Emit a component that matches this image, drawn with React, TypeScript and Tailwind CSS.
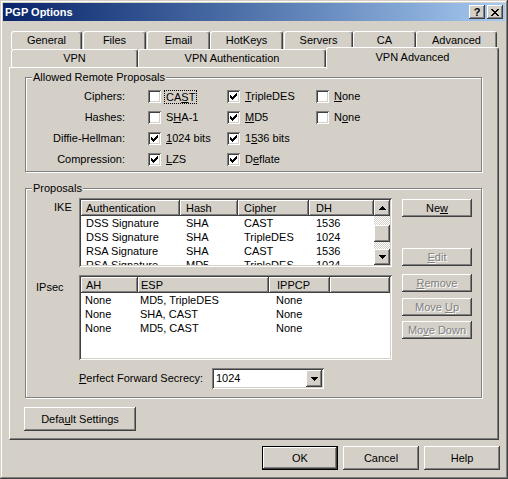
import React from "react";

const RAISED =
  "bg-[#D4D0C8] shadow-[inset_-1px_-1px_0_#404040,inset_1px_1px_0_#ffffff,inset_-2px_-2px_0_#808080]";
const SUNKEN =
  "shadow-[inset_1px_1px_0_#808080,inset_-1px_-1px_0_#ffffff,inset_2px_2px_0_#404040,inset_-2px_-2px_0_#D4D0C8]";
const ETCHED =
  "border border-[#808080] shadow-[inset_1px_1px_0_#ffffff,1px_1px_0_#ffffff]";

function CheckMark() {
  const rects: [number, number, number][] = [
    [6, 0, 1],
    [5, 1, 2],
    [0, 2, 1],
    [4, 2, 3],
    [0, 3, 2],
    [3, 3, 3],
    [0, 4, 5],
    [1, 5, 3],
    [2, 6, 1],
  ];
  return (
    <svg
      className="absolute left-[3px] top-[3px]"
      width="7"
      height="7"
      viewBox="0 0 7 7"
      shapeRendering="crispEdges"
    >
      {rects.map(([x, y, w], i) => (
        <rect key={i} x={x} y={y} width={w} height={1} fill="#000" />
      ))}
    </svg>
  );
}

function Check({ checked }: { checked: boolean }) {
  return (
    <span className={"relative block w-[13px] h-[13px] shrink-0 bg-white " + SUNKEN}>
      {checked && <CheckMark />}
    </span>
  );
}

function Arrow({ up }: { up?: boolean }) {
  const rows = up
    ? [
        [3, 0, 1],
        [2, 1, 3],
        [1, 2, 5],
        [0, 3, 7],
      ]
    : [
        [0, 0, 7],
        [1, 1, 5],
        [2, 2, 3],
        [3, 3, 1],
      ];
  return (
    <svg width="7" height="4" viewBox="0 0 7 4" shapeRendering="crispEdges">
      {rows.map(([x, y, w], i) => (
        <rect key={i} x={x} y={y} width={w} height={1} fill="#000" />
      ))}
    </svg>
  );
}

function CloseGlyph() {
  const rows: [number, number, number][] = [
    [0, 0, 2],
    [6, 0, 2],
    [1, 1, 2],
    [5, 1, 2],
    [2, 2, 4],
    [3, 3, 2],
    [2, 4, 4],
    [1, 5, 2],
    [5, 5, 2],
    [0, 6, 2],
    [6, 6, 2],
  ];
  return (
    <svg width="8" height="7" viewBox="0 0 8 7" shapeRendering="crispEdges">
      {rows.map(([x, y, w], i) => (
        <rect key={i} x={x} y={y} width={w} height={1} fill="#000" />
      ))}
    </svg>
  );
}

function Tab({
  label,
  w,
  ml,
  selected,
}: {
  label: string;
  w: number;
  ml: number;
  selected?: boolean;
}) {
  return (
    <div
      style={{ width: w, marginLeft: ml }}
      className={
        "shrink-0 flex items-center justify-center border-t border-l border-r border-t-white border-l-white border-r-[#404040] rounded-t-[3px] shadow-[inset_-1px_0_0_#808080] bg-[#D4D0C8] whitespace-nowrap " +
        (selected ? "relative z-10 -mt-[2px] h-[22px] pb-[3px]" : "h-[18px]")
      }
    >
      {label}
    </div>
  );
}

function Btn({
  children,
  w,
  h,
  disabled,
  def,
  className = "",
}: {
  children: React.ReactNode;
  w: number;
  h: number;
  disabled?: boolean;
  def?: boolean;
  className?: string;
}) {
  const inner = (
    <div
      style={def ? undefined : { width: w, height: h }}
      className={
        RAISED +
        " flex items-center justify-center whitespace-nowrap " +
        (def ? "w-full h-full " : "") +
        (disabled ? "text-[#808080] [text-shadow:1px_1px_0_#ffffff] " : "")
      }
    >
      <span>{children}</span>
    </div>
  );
  if (def) {
    return (
      <div style={{ width: w, height: h }} className={"border border-black " + className}>
        {inner}
      </div>
    );
  }
  return <div className={className}>{inner}</div>;
}

function Group({
  title,
  h,
  className = "",
  children,
}: {
  title: string;
  h: number;
  className?: string;
  children: React.ReactNode;
}) {
  return (
    <div style={{ height: h }} className={"relative w-[457px] " + ETCHED + " " + className}>
      <span className="absolute left-[6px] -top-[7px] px-[1px] bg-[#D4D0C8] leading-[13px]">
        {title}
      </span>
      {children}
    </div>
  );
}

function OptRow({
  label,
  cells,
}: {
  label: string;
  cells: { checked: boolean; text: React.ReactNode; focus?: boolean; w: number }[];
}) {
  return (
    <div className="flex items-center h-[21px]">
      <div className="w-[99px] text-right whitespace-nowrap">{label}</div>
      <div className="w-[23px]" />
      {cells.map((c, i) => (
        <div key={i} style={{ width: c.w }} className="flex items-center shrink-0">
          <Check checked={c.checked} />
          {c.focus ? (
            <span className="ml-[3px] border border-dotted border-black px-[1px] leading-[12px]">
              {c.text}
            </span>
          ) : (
            <span className="ml-[5px] whitespace-nowrap">{c.text}</span>
          )}
        </div>
      ))}
    </div>
  );
}

const HEAD =
  "h-[16px] shrink-0 flex items-center overflow-hidden whitespace-nowrap bg-[#D4D0C8] shadow-[inset_-1px_-1px_0_#404040,inset_1px_1px_0_#ffffff,inset_-2px_-2px_0_#808080]";

function IkeList() {
  const cols = [
    { w: 99, pl: 5 },
    { w: 58, pl: 6 },
    { w: 71, pl: 6 },
    { w: 65, pl: 7 },
  ];
  const heads = ["Authentication", "Hash", "Cipher", "DH"];
  const rows = [
    ["DSS Signature", "SHA", "CAST", "1536"],
    ["DSS Signature", "SHA", "TripleDES", "1024"],
    ["RSA Signature", "SHA", "CAST", "1536"],
    ["RSA Signature", "MD5", "TripleDES", "1024"],
  ];
  return (
    <div className={"w-[313px] h-[69px] p-[2px] bg-white flex " + SUNKEN}>
      <div className="flex-1 flex flex-col overflow-hidden">
        <div className="flex">
          {heads.map((h, i) => (
            <div key={i} style={{ width: cols[i].w, paddingLeft: cols[i].pl }} className={HEAD}>
              {h}
            </div>
          ))}
        </div>
        {rows.map((r, ri) => (
          <div key={ri} className="flex h-[14px] shrink-0 items-center">
            {r.map((c, i) => (
              <div
                key={i}
                style={{ width: cols[i].w, paddingLeft: cols[i].pl }}
                className="shrink-0 whitespace-nowrap leading-[14px]"
              >
                {c}
              </div>
            ))}
          </div>
        ))}
      </div>
      <div className="w-[16px] flex flex-col">
        <div className={"h-[16px] shrink-0 flex items-center justify-center " + RAISED}>
          <Arrow up />
        </div>
        <div className="flex-1 bg-[repeating-conic-gradient(#D4D0C8_0_25%,#ffffff_0_50%)] bg-[length:2px_2px]">
          <div className={"mt-[9px] h-[17px] " + RAISED} />
        </div>
        <div className={"h-[16px] shrink-0 flex items-center justify-center " + RAISED}>
          <Arrow />
        </div>
      </div>
    </div>
  );
}

function IpsecList() {
  const cols = [
    { w: 57, pl: 4 },
    { w: 131, pl: 2 },
    { w: 61, pl: 7 },
  ];
  const heads = ["AH", "ESP", "IPPCP"];
  const rows = [
    ["None", "MD5, TripleDES", "None"],
    ["None", "SHA, CAST", "None"],
    ["None", "MD5, CAST", "None"],
  ];
  return (
    <div className={"w-[313px] h-[85px] p-[2px] bg-white " + SUNKEN}>
      <div className="flex flex-col overflow-hidden h-full">
        <div className="flex">
          {heads.map((h, i) => (
            <div
              key={i}
              style={{ width: cols[i].w, paddingLeft: cols[i].pl + 1 }}
              className={HEAD}
            >
              {h}
            </div>
          ))}
          <div className={HEAD + " flex-1"} />
        </div>
        {rows.map((r, ri) => (
          <div key={ri} className="flex h-[14px] shrink-0 items-center">
            {r.map((c, i) => (
              <div
                key={i}
                style={{ width: cols[i].w, paddingLeft: cols[i].pl }}
                className="shrink-0 whitespace-nowrap leading-[14px]"
              >
                {c}
              </div>
            ))}
          </div>
        ))}
      </div>
    </div>
  );
}

export default function App() {
  const row1: [string, number, number][] = [
    ["General", 71, 0],
    ["Files", 63, 1],
    ["Email", 63, 1],
    ["HotKeys", 73, 0],
    ["Servers", 69, 1],
    ["CA", 63, 0],
    ["Advanced", 81, 0],
  ];
  return (
    <div className="w-[508px] h-[479px] bg-[#D4D0C8] p-[3px] font-['Liberation_Sans',Arial,sans-serif] text-[11px] leading-[13px] text-black shadow-[inset_-1px_-1px_0_#404040,inset_1px_1px_0_#D4D0C8,inset_-2px_-2px_0_#808080,inset_2px_2px_0_#ffffff] select-none">
      {/* Title bar */}
      <div className="h-[18px] flex items-center bg-gradient-to-r from-[#0A246A] to-[#A6CAF0] pl-[2px] pr-[2px]">
        <span className="font-bold text-white flex-1">PGP Options</span>
        <div className={"w-[16px] h-[14px] flex items-center justify-center " + RAISED}>
          <span className="font-bold text-[11px] leading-none">?</span>
        </div>
        <div className={"ml-[2px] w-[16px] h-[14px] flex items-center justify-center " + RAISED}>
          <CloseGlyph />
        </div>
      </div>

      {/* Tabs */}
      <div className="mt-[10px] ml-[8px] flex h-[18px]">
        {row1.map(([l, w, ml]) => (
          <Tab key={l} label={l} w={w} ml={ml} />
        ))}
      </div>
      <div className="ml-[8px] flex h-[18px] items-start">
        <Tab label="VPN" w={127} ml={0} />
        <Tab label="VPN Authentication" w={188} ml={0} />
        <Tab label="VPN Advanced" w={173} ml={0} selected />
      </div>

      {/* Panel */}
      <div className="ml-[6px] w-[490px] h-[373px] border-t border-l border-r border-b border-t-white border-l-white border-r-[#404040] border-b-[#404040] shadow-[inset_-1px_-1px_0_#808080] pl-[15px] pt-[9px]">
        <Group title="Allowed Remote Proposals" h={95}>
          <div className="pt-[8px]">
            <OptRow
              label="Ciphers:"
              cells={[
                {
                  checked: false,
                  focus: true,
                  w: 79,
                  text: (
                    <>
                      CA<u>S</u>T
                    </>
                  ),
                },
                {
                  checked: true,
                  w: 89,
                  text: (
                    <>
                      <u>T</u>ripleDES
                    </>
                  ),
                },
                {
                  checked: false,
                  w: 80,
                  text: (
                    <>
                      <u>N</u>one
                    </>
                  ),
                },
              ]}
            />
            <OptRow
              label="Hashes:"
              cells={[
                {
                  checked: false,
                  w: 79,
                  text: (
                    <>
                      S<u>H</u>A-1
                    </>
                  ),
                },
                {
                  checked: true,
                  w: 89,
                  text: (
                    <>
                      <u>M</u>D5
                    </>
                  ),
                },
                {
                  checked: false,
                  w: 80,
                  text: (
                    <>
                      N<u>o</u>ne
                    </>
                  ),
                },
              ]}
            />
            <OptRow
              label="Diffie-Hellman:"
              cells={[
                {
                  checked: true,
                  w: 79,
                  text: (
                    <>
                      <u>1</u>024 bits
                    </>
                  ),
                },
                {
                  checked: true,
                  w: 89,
                  text: (
                    <>
                      1<u>5</u>36 bits
                    </>
                  ),
                },
              ]}
            />
            <OptRow
              label="Compression:"
              cells={[
                {
                  checked: true,
                  w: 79,
                  text: (
                    <>
                      <u>L</u>ZS
                    </>
                  ),
                },
                {
                  checked: true,
                  w: 89,
                  text: (
                    <>
                      D<u>e</u>flate
                    </>
                  ),
                },
              ]}
            />
          </div>
        </Group>

        <Group title="Proposals" h={210} className="mt-[16px]">
          <div className="flex">
            <div className="flex flex-col pt-[9px]">
              <div className="flex">
                <div className="w-[53px] pl-[28px] pt-[3px]">IKE</div>
                <IkeList />
              </div>
              <div className="flex mt-[8px]">
                <div className="w-[53px] pl-[10px] pt-[6px]">IPsec</div>
                <IpsecList />
              </div>
            </div>
            <div className="ml-[10px] flex flex-col">
              <Btn w={70} h={18} className="mt-[10px]">
                Ne<u>w</u>
              </Btn>
              <Btn w={70} h={18} className="mt-[31px]" disabled>
                <u>E</u>dit
              </Btn>
              <Btn w={70} h={18} className="mt-[8px]" disabled>
                <u>R</u>emove
              </Btn>
              <Btn w={70} h={18} className="mt-[6px]" disabled>
                Move <u>U</u>p
              </Btn>
              <Btn w={70} h={18} className="mt-[5px]" disabled>
                Mo<u>v</u>e Down
              </Btn>
            </div>
          </div>
          <div className="flex items-center mt-[8px] ml-[53px]">
            <div className="w-[133px] whitespace-nowrap">
              <u>P</u>erfect Forward Secrecy:
            </div>
            <div className={"w-[112px] h-[21px] p-[2px] bg-white flex " + SUNKEN}>
              <div className="flex-1 flex items-center pl-[2px]">1024</div>
              <div className={"w-[16px] h-[17px] flex items-center justify-center " + RAISED}>
                <Arrow />
              </div>
            </div>
          </div>
        </Group>

        <Btn w={112} h={24} className="mt-[9px] -ml-[1px]">
          Defa<u>u</u>lt Settings
        </Btn>
      </div>

      {/* Bottom buttons */}
      <div className="mt-[6px] flex justify-end pr-[5px] gap-[5px]">
        <Btn w={76} h={24} def>
          OK
        </Btn>
        <Btn w={76} h={24}>
          Cancel
        </Btn>
        <Btn w={76} h={24}>
          Help
        </Btn>
      </div>
    </div>
  );
}
